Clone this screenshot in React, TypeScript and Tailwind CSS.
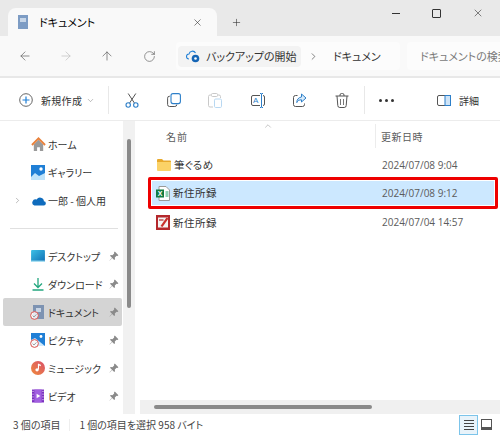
import { ArrowLeft, ArrowRight, ArrowUp, RotateCw, X, Plus, ChevronDown, ChevronRight, ChevronUp } from "lucide-react";

const font = "font-['Noto_Sans_CJK_JP','Noto_Sans',sans-serif] [font-feature-settings:'palt']";

const HomeIcon = () => (
  <svg width="15" height="15" viewBox="0 0 16 16">
    <path d="M3 8v7h3.5v-4h3v4H13V8L8 3z" fill="#9a9a9a" />
    <path d="M1 8.5 8 1.5l7 7" fill="none" stroke="#e8803a" strokeWidth="2" />
  </svg>
);

const GalleryIcon = () => (
  <svg width="14" height="15" viewBox="0 0 14 15">
    <rect x="0" y="0" width="14" height="15" fill="#1f7fd6" />
    <path d="M0 15v-3l4-4 4 3 6-3v7z" fill="#bfe3fa" />
    <circle cx="10" cy="4" r="1.7" fill="#fff" />
  </svg>
);

const CloudIcon = () => (
  <svg width="15" height="11" viewBox="0 0 16 12">
    <path d="M3.5 11.5h10a2.3 2.3 0 0 0 .4-4.6A4.2 4.2 0 0 0 6 5 3.2 3.2 0 0 0 3.5 11.5z" fill="#0f6cbd" />
  </svg>
);

const ShieldBadge = () => (
  <svg width="9" height="9" viewBox="0 0 9 9" className="absolute left-[-1px] bottom-[-1px]">
    <circle cx="4.5" cy="4.5" r="3.9" fill="#fff" fillOpacity="0.8" stroke="#d9534f" strokeWidth="1" />
    <path d="M2.6 4.6 4 6l2.4-2.6" fill="none" stroke="#8a8a8a" strokeWidth="0.8" />
  </svg>
);

const DesktopIcon = () => (
  <svg width="14" height="12" viewBox="0 0 15 13">
    <defs>
      <linearGradient id="desk" x1="0" x2="1" y1="0" y2="1">
        <stop offset="0" stopColor="#3cc0e6" />
        <stop offset="1" stopColor="#0f6fb4" />
      </linearGradient>
    </defs>
    <rect width="15" height="13" rx="1" fill="url(#desk)" />
    <rect width="15" height="1.5" y="11.5" fill="#a9dff2" />
  </svg>
);

const DownloadIcon = () => (
  <svg width="14" height="14" viewBox="0 0 14 14" fill="none" stroke="#22a67e" strokeWidth="1.3">
    <path d="M7 1v9M3 6.5 7 10.5l4-4" />
    <path d="M1.5 13h11" strokeWidth="1.5" />
  </svg>
);

const DocsIcon = () => (
  <div className="relative w-[14px] h-[14px]">
    <svg width="14" height="14" viewBox="0 0 14 14">
      <rect x="2" y="0" width="11" height="14" fill="#7d93b2" />
      <rect x="5" y="3" width="5" height="4" fill="#c9d5e5" />
    </svg>
    <ShieldBadge />
  </div>
);

const PicturesIcon = () => (
  <div className="relative w-[14px] h-[14px]">
    <svg width="14" height="14" viewBox="0 0 14 14">
      <rect width="14" height="13" fill="#1f7fd6" />
      <path d="M0 13V7l4-2 10 8z" fill="#cfe9fb" />
      <circle cx="10" cy="3.5" r="1.4" fill="#fff" />
    </svg>
    <ShieldBadge />
  </div>
);

const MusicIcon = () => (
  <svg width="14" height="14" viewBox="0 0 15 15">
    <defs>
      <linearGradient id="mus" x1="0" x2="1" y1="1" y2="0">
        <stop offset="0" stopColor="#ef8a3c" />
        <stop offset="1" stopColor="#d9506a" />
      </linearGradient>
    </defs>
    <circle cx="7.5" cy="7.5" r="7.5" fill="url(#mus)" />
    <path d="M8 3v6" stroke="#fff" strokeWidth="1.2" />
    <circle cx="6.5" cy="9.5" r="1.8" fill="#fff" />
    <path d="M8 3l2.5 1v1.5L8 4.5z" fill="#fff" />
  </svg>
);

const VideoIcon = () => (
  <svg width="12" height="14" viewBox="0 0 13 14">
    <rect width="13" height="14" fill="#7b2fc0" />
    <rect x="2.5" y="0" width="8" height="14" fill="#a25fe0" />
    <path d="M5 4.5v5l4-2.5z" fill="#fff" />
    <path d="M0.5 2h1.2M0.5 5h1.2M0.5 8h1.2M0.5 11h1.2M11.3 2h1.2M11.3 5h1.2M11.3 8h1.2M11.3 11h1.2" stroke="#fff" strokeWidth="1" />
  </svg>
);

const FolderIcon = () => (
  <svg width="14" height="12" viewBox="0 0 14 12">
    <path d="M0 1a1 1 0 0 1 1-1h4l1.5 1.5H13a1 1 0 0 1 1 1V3H0z" fill="#e8a92c" />
    <path d="M0 3h14v8a1 1 0 0 1-1 1H1a1 1 0 0 1-1-1z" fill="#fbd267" />
  </svg>
);

const ExcelIcon = () => (
  <div className="relative w-[14px] h-[15px]">
    <svg width="14" height="15" viewBox="0 0 14 15">
      <path d="M3 .5h7l3.5 3.5v10.5H3z" fill="#fff" stroke="#9a9a9a" />
      <path d="M9.5 6h3M9.5 8h3M9.5 10h3" stroke="#21a366" />
      <rect x="0" y="3.5" width="8" height="8" fill="#107c41" />
    </svg>
    <span className="absolute left-0 top-[3px] w-[8px] h-[9px] text-[7px] leading-[9px] text-center text-white font-bold font-['Liberation_Sans',sans-serif]">X</span>
  </div>
);

const AccessIcon = () => (
  <svg width="14" height="15" viewBox="0 0 14 15">
    <rect width="14" height="15" fill="#b5282c" />
    <rect x="2" y="2.5" width="10" height="10" fill="#f4f4f4" />
    <path d="M4.5 11 10.5 2.5l2 1L6.5 12z" fill="#c9302c" />
    <path d="M3 5h4.5" stroke="#b5282c" strokeWidth="1.2" />
  </svg>
);

const PinIcon = () => (
  <svg width="10" height="10" viewBox="0 0 10 10">
    <path d="M5.8.6 9.4 4.2 8.5 5 7.6 4.8 5.8 6.6l.2 1.6-.8.8-2-2L.8 9.4l-.2-.2 2.4-2.4-2-2 .8-.8 1.6.2L5.2 2.4 5 1.500z" fill="#8a8a8a" />
  </svg>
);

const ScissorsIcon = () => (
  <svg width="14" height="15" viewBox="0 0 14 15" fill="none">
    <path d="M3.2 0.5 9.4 10M10.8 0.5 4.6 10" stroke="#555" strokeWidth="1" />
    <circle cx="3.2" cy="12" r="2.2" stroke="#2d7fc9" strokeWidth="1.1" />
    <circle cx="10.8" cy="12" r="2.2" stroke="#2d7fc9" strokeWidth="1.1" />
  </svg>
);

const CopyIcon = () => (
  <svg width="14" height="14" viewBox="0 0 14 14" fill="none">
    <path d="M2.8 3.2A2 2 0 0 0 .6 5.2v6.3a2 2 0 0 0 2 2h5.2a2 2 0 0 0 2-2" stroke="#555" strokeWidth="1" />
    <rect x="4" y="0.6" width="9.4" height="10" rx="2" fill="#fff" stroke="#2d7fc9" strokeWidth="1.1" />
  </svg>
);

const PasteIcon = () => (
  <svg width="14" height="15" viewBox="0 0 14 15" fill="none">
    <path d="M3 2H2a1.5 1.5 0 0 0-1.5 1.5v9A1.5 1.5 0 0 0 2 14h3M10 2h1a1.5 1.5 0 0 1 1.5 1.5V5" stroke="#c9c9c9" />
    <rect x="3.5" y="0.5" width="6" height="3" rx="1" stroke="#c9c9c9" />
    <rect x="6.5" y="6" width="7" height="8.5" rx="1.2" stroke="#b8d8f2" />
  </svg>
);

const RenameIcon = () => (
  <div className="relative w-[14px] h-[15px]">
    <svg width="14" height="15" viewBox="0 0 14 15" fill="none">
      <path d="M9 2.5H2a1.5 1.5 0 0 0-1.5 1.5v7A1.5 1.5 0 0 0 2 12.5h7M12 2.5a1.5 1.5 0 0 1 1.5 1.5v7a1.5 1.5 0 0 1-1.5 1.5" stroke="#555" />
      <path d="M9 .5h1a1 1 0 0 1 .5.5 1 1 0 0 1 .5-.5h1M10.5 1v13M9 14.5h1a1 1 0 0 0 .5-.5 1 1 0 0 0 .5.5h1" stroke="#2d7fc9" />
    </svg>
    <span className="absolute left-[2px] top-[3px] text-[8px] leading-[9px] text-[#2d7fc9] font-['Liberation_Sans',sans-serif]">A</span>
  </div>
);

const ShareIcon = () => (
  <svg width="14" height="14" viewBox="0 0 14 14" fill="none">
    <path d="M4.5 2.5H2.5a2 2 0 0 0-2 2v7a2 2 0 0 0 2 2h7a2 2 0 0 0 2-2v-1" stroke="#555" />
    <path d="M8.5 1 13 5l-4.5 4V6.8C6 6.8 4.6 7.8 3.8 9.6c0-3.2 1.8-5.2 4.7-5.6z" fill="#d9ebfa" stroke="#2d7fc9" strokeLinejoin="round" />
  </svg>
);

const TrashIcon = () => (
  <svg width="14" height="15" viewBox="0 0 14 15" fill="none" stroke="#555">
    <path d="M.5 3h13M5 3V2a1.5 1.5 0 0 1 1.5-1.5h1A1.5 1.5 0 0 1 9 2v1" />
    <path d="M2 3l.8 9.5a2 2 0 0 0 2 2h4.400a2 2 0 0 0 2-2L12 3" />
    <path d="M5.5 6v6M8.500 6v6" stroke="#777" />
  </svg>
);

const sideTop = [
  { name: "ホーム", icon: <HomeIcon /> },
  { name: "ギャラリー", icon: <GalleryIcon /> },
  { name: "一郎 - 個人用", icon: <CloudIcon />, chevron: true },
];

const sidePinned = [
  { name: "デスクトップ", icon: <DesktopIcon /> },
  { name: "ダウンロード", icon: <DownloadIcon /> },
  { name: "ドキュメント", icon: <DocsIcon />, active: true },
  { name: "ピクチャ", icon: <PicturesIcon /> },
  { name: "ミュージック", icon: <MusicIcon /> },
  { name: "ビデオ", icon: <VideoIcon /> },
];

export default function App() {
  return (
    <div className={`w-[500px] h-[435px] flex flex-col overflow-hidden bg-white text-[#1c1c1c] ${font}`}>
      {/* Title bar */}
      <div className="h-[36px] bg-[#e9e9e9] flex items-end shrink-0">
        <div className="ml-[8px] w-[209px] h-[28px] bg-[#f9f9f9] rounded-t-lg flex items-center pl-[10px] pr-[14px]">
          <svg width="10" height="14" viewBox="0 0 10 14">
            <rect width="10" height="14" fill="#7d9cc4" />
            <rect x="2" y="3" width="6" height="4" fill="#c7d6e8" />
          </svg>
          <span className="ml-[11px] text-[11px] text-black">ドキュメント</span>
          <X size={11} strokeWidth={1.3} className="ml-auto text-[#333]" />
        </div>
        <Plus size={11} strokeWidth={1.3} className="ml-[14px] mb-[8px] text-[#333]" />
        <div className="ml-auto self-start flex items-center mt-[7px] mr-[2px]">
          <div className="w-[41px] flex justify-center"><span className="w-[8px] h-px bg-[#333]" /></div>
          <div className="w-[41px] flex justify-center"><span className="w-[9px] h-[9px] border border-[#333] rounded-[1px]" /></div>
          <div className="w-[41px] flex justify-center"><X size={12} strokeWidth={1.2} className="text-[#333]" /></div>
        </div>
      </div>

      {/* Nav bar */}
      <div className="h-[42px] bg-[#f9f9f9] border-b-2 border-[#e8e8e8] flex items-center shrink-0 text-[#5f5f5f]">
        <ArrowLeft size={14} strokeWidth={1.2} className="ml-[18px]" />
        <ArrowRight size={14} strokeWidth={1.2} className="ml-[27px] text-[#bdbdbd]" />
        <ArrowUp size={14} strokeWidth={1.2} className="ml-[27px]" />
        <RotateCw size={13} strokeWidth={1.2} className="ml-[29px]" />
        <div className="ml-[20px] w-[224px] h-[28px] bg-[#fcfcfc] rounded flex items-center pl-[2px] text-[11px] text-[#333] shrink-0 overflow-hidden">
          <div className="h-[21px] w-[123px] bg-[#f3f3f3] rounded flex items-center pl-[8px] shrink-0">
            <svg width="14" height="13" viewBox="0 0 14 13" className="shrink-0">
              <path d="M3 9a2.5 2.5 0 0 1 0-5 3.5 3.5 0 0 1 6.5-1" fill="none" stroke="#1f7fd6" strokeWidth="1.1" />
              <circle cx="9.5" cy="8.5" r="3.8" fill="#1565b5" />
              <circle cx="9.5" cy="8.5" r="1.3" fill="#fff" />
            </svg>
            <span className="ml-[6px] whitespace-nowrap">バックアップの開始</span>
          </div>
          <ChevronRight size={11} strokeWidth={1.3} className="ml-[7px] shrink-0" />
          <span className="ml-[14px] whitespace-nowrap">ドキュメン</span>
        </div>
        <div className="ml-[7px] flex-1 h-[28px] bg-[#fcfcfc] rounded-l flex items-center pl-[13px] text-[11px] text-[#7a7a7a] overflow-hidden whitespace-nowrap">
          ドキュメントの検索
        </div>
      </div>

      {/* Command bar */}
      <div className="h-[43px] bg-white border-b border-[#ececec] flex items-center shrink-0 text-[#444] pt-[2px]">
        <svg width="14" height="14" viewBox="0 0 14 14" className="ml-[19px]">
          <circle cx="7" cy="7" r="6.3" fill="none" stroke="#555" strokeWidth="0.9" />
          <path d="M7 3.5v7M3.5 7h7" stroke="#1f7fd6" strokeWidth="1.2" />
        </svg>
        <span className="ml-[8px] w-[41px] text-[10px] tracking-[0.3px] text-[#333] whitespace-nowrap">新規作成</span>
        <ChevronDown size={9} strokeWidth={1.3} className="ml-[4px] text-[#777]" />
        <div className="ml-[13px] w-px h-[28px] bg-[#e8e8e8]" />
        <div className="ml-[16px]"><ScissorsIcon /></div>
        <div className="ml-[28px]"><CopyIcon /></div>
        <div className="ml-[27px]"><PasteIcon /></div>
        <div className="ml-[29px]"><RenameIcon /></div>
        <div className="ml-[28px]"><ShareIcon /></div>
        <div className="ml-[28px]"><TrashIcon /></div>
        <div className="ml-[15px] w-px h-[28px] bg-[#e8e8e8]" />
        <div className="ml-[14px] flex gap-[3px]">
          <span className="w-[3px] h-[3px] rounded-full bg-[#333]" />
          <span className="w-[3px] h-[3px] rounded-full bg-[#333]" />
          <span className="w-[3px] h-[3px] rounded-full bg-[#333]" />
        </div>
        <svg width="14" height="11" viewBox="0 0 14 11" className="ml-[43px]">
          <rect x="0.5" y="0.5" width="13" height="10" rx="1.5" fill="none" stroke="#555" />
          <rect x="8" y="0.5" width="5.5" height="10" fill="#cfe4f7" stroke="#2d7fc9" />
        </svg>
        <span className="ml-[8px] text-[10px] text-[#333]">詳細</span>
      </div>

      {/* Body */}
      <div className="flex flex-1 min-h-0">
        {/* Sidebar */}
        <div className="w-[123px] pt-[9px] pl-[3px] pr-[1px] shrink-0 text-[10px] text-[#333] flex flex-col">
          {sideTop.map((s) => (
            <div key={s.name} className="h-[28px] flex items-center relative">
              {s.chevron && <ChevronRight size={9} strokeWidth={1.3} className="absolute left-[10px] text-[#777]" />}
              <div className="w-[16px] ml-[27px] flex justify-center shrink-0">{s.icon}</div>
              <span className="ml-[2px] whitespace-nowrap">{s.name}</span>
            </div>
          ))}
          <div className="ml-[7px] mr-[4px] mt-[14px] mb-[13px] h-px bg-[#e0e0e0]" />
          {sidePinned.map((s) => (
            <div key={s.name} className={`h-[28px] flex items-center rounded-[2px] ${s.active ? "bg-[#d4d4d4]" : ""}`}>
              <div className="w-[16px] ml-[27px] flex justify-center shrink-0">{s.icon}</div>
              <span className="ml-[2px] whitespace-nowrap">{s.name}</span>
              <div className="ml-auto mr-[3px]"><PinIcon /></div>
            </div>
          ))}
        </div>

        {/* Sidebar scrollbar */}
        <div className="w-[12px] bg-[#f1f1f1] shrink-0 pt-[18px] flex justify-center">
          <div className="w-[4px] h-[169px] bg-[#8a8a8a] rounded-full" />
        </div>

        {/* File list */}
        <div className="flex-1 min-w-0 flex flex-col pl-[13px]">
          <div className="h-[30px] relative flex items-center text-[10px] text-[#5b5b5b] shrink-0">
            <ChevronUp size={10} strokeWidth={1} className="absolute left-[115px] top-0 text-[#777]" />
            <span className="ml-[18px] tracking-[1px]">名前</span>
            <span className="ml-[187px] border-l border-[#ececec] h-[24px] pl-[5px] flex items-center tracking-[0.5px]">更新日時</span>
          </div>
          <div className="flex flex-col text-[10.5px] text-[#333] mr-[2px]">
            <div className="h-[26px] flex items-center pl-[9px] pt-[2px]">
              <FolderIcon />
              <span className="ml-[3px] w-[208px] tracking-[0.3px]">筆ぐるめ</span>
              <span className="text-[10px] text-[#5b5b5b] font-['Open_Sans',sans-serif]">2024/07/08 9:04</span>
            </div>
            {/* Red outline around the selected row */}
            <div className="h-[32px] border-[3px] border-[#ee0000] rounded-[2px]">
              <div className="h-full border border-white bg-[#cce8ff] flex items-center pl-[4px]">
                <ExcelIcon />
                <span className="ml-[3px] w-[209px] tracking-[0.5px]">新住所録</span>
                <span className="text-[10px] text-[#5b5b5b] font-['Open_Sans',sans-serif]">2024/07/08 9:12</span>
              </div>
            </div>
            <div className="h-[27px] flex items-center pl-[8px]">
              <AccessIcon />
              <span className="ml-[3px] w-[209px] tracking-[0.5px]">新住所録</span>
              <span className="text-[10px] text-[#5b5b5b] font-['Open_Sans',sans-serif]">2024/07/04 14:57</span>
            </div>
          </div>
          {/* Horizontal scrollbar */}
          <div className="mt-auto h-[14px] bg-[#f0f0f0] flex items-center -ml-[8px] pl-[14px]">
            <div className="w-[218px] h-[4px] bg-[#8a8a8a] rounded-full" />
          </div>
        </div>
      </div>

      {/* Status bar */}
      <div className="h-[21px] shrink-0 bg-white flex items-center text-[10px] text-[#444]">
        <span className="ml-[13px]">3 個の項目</span>
        <span className="ml-[9px] w-px h-[12px] bg-[#eee]" />
        <span className="ml-[9px]">1 個の項目を選択 958 バイト</span>
        <div className="ml-auto mr-[8px] flex items-center gap-[3px]">
          <div className="w-[19px] h-[20px] border border-[#7cc4ea] bg-[#e8f3fa] flex flex-col items-center justify-center gap-[2px]">
            <span className="w-[10px] h-px bg-[#444]" />
            <span className="w-[10px] h-px bg-[#444]" />
            <span className="w-[10px] h-px bg-[#444]" />
            <span className="w-[10px] h-px bg-[#444]" />
          </div>
          <div className="w-[11px] h-[11px] border border-[#555] border-b-[3px]" />
        </div>
      </div>
    </div>
  );
}
